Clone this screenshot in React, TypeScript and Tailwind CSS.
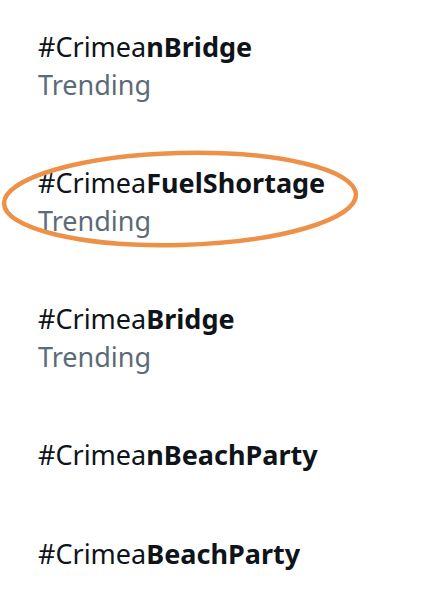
import React from "react";

const rows = [
  { pre: "#Crimea", bold: "nBridge", trending: true },
  { pre: "#Crimea", bold: "FuelShortage", trending: true },
  { pre: "#Crimea", bold: "Bridge", trending: true },
  { pre: "#Crimea", bold: "nBeachParty", trending: false },
  { pre: "#Crimea", bold: "BeachParty", trending: false },
];

export default function App() {
  return (
    <div
      className="relative w-[447px] h-[594px] bg-white overflow-hidden"
      style={{ fontFamily: '"Noto Sans", "Open Sans", sans-serif' }}
    >
      <div className="flex flex-col pl-[38px] pt-[28px]">
        {rows.map((r, i) => (
          <div key={i} className={r.trending ? "h-[136px]" : "h-[99px]"}>
            <div className="text-[27px] leading-[37px] text-[#0f1419]">
              {r.pre}
              <span className="font-bold">{r.bold}</span>
            </div>
            {r.trending && (
              <div className="text-[27px] leading-[37px] mt-[1px] text-[#5b6b78]">Trending</div>
            )}
          </div>
        ))}
      </div>
      <svg className="absolute left-0 top-0 pointer-events-none" width="447" height="594">
        <ellipse cx="180" cy="199" rx="176" ry="46" fill="none" stroke="#ee9148" strokeWidth="4.5" transform="rotate(-1.5 180 199)" />
      </svg>
    </div>
  );
}
